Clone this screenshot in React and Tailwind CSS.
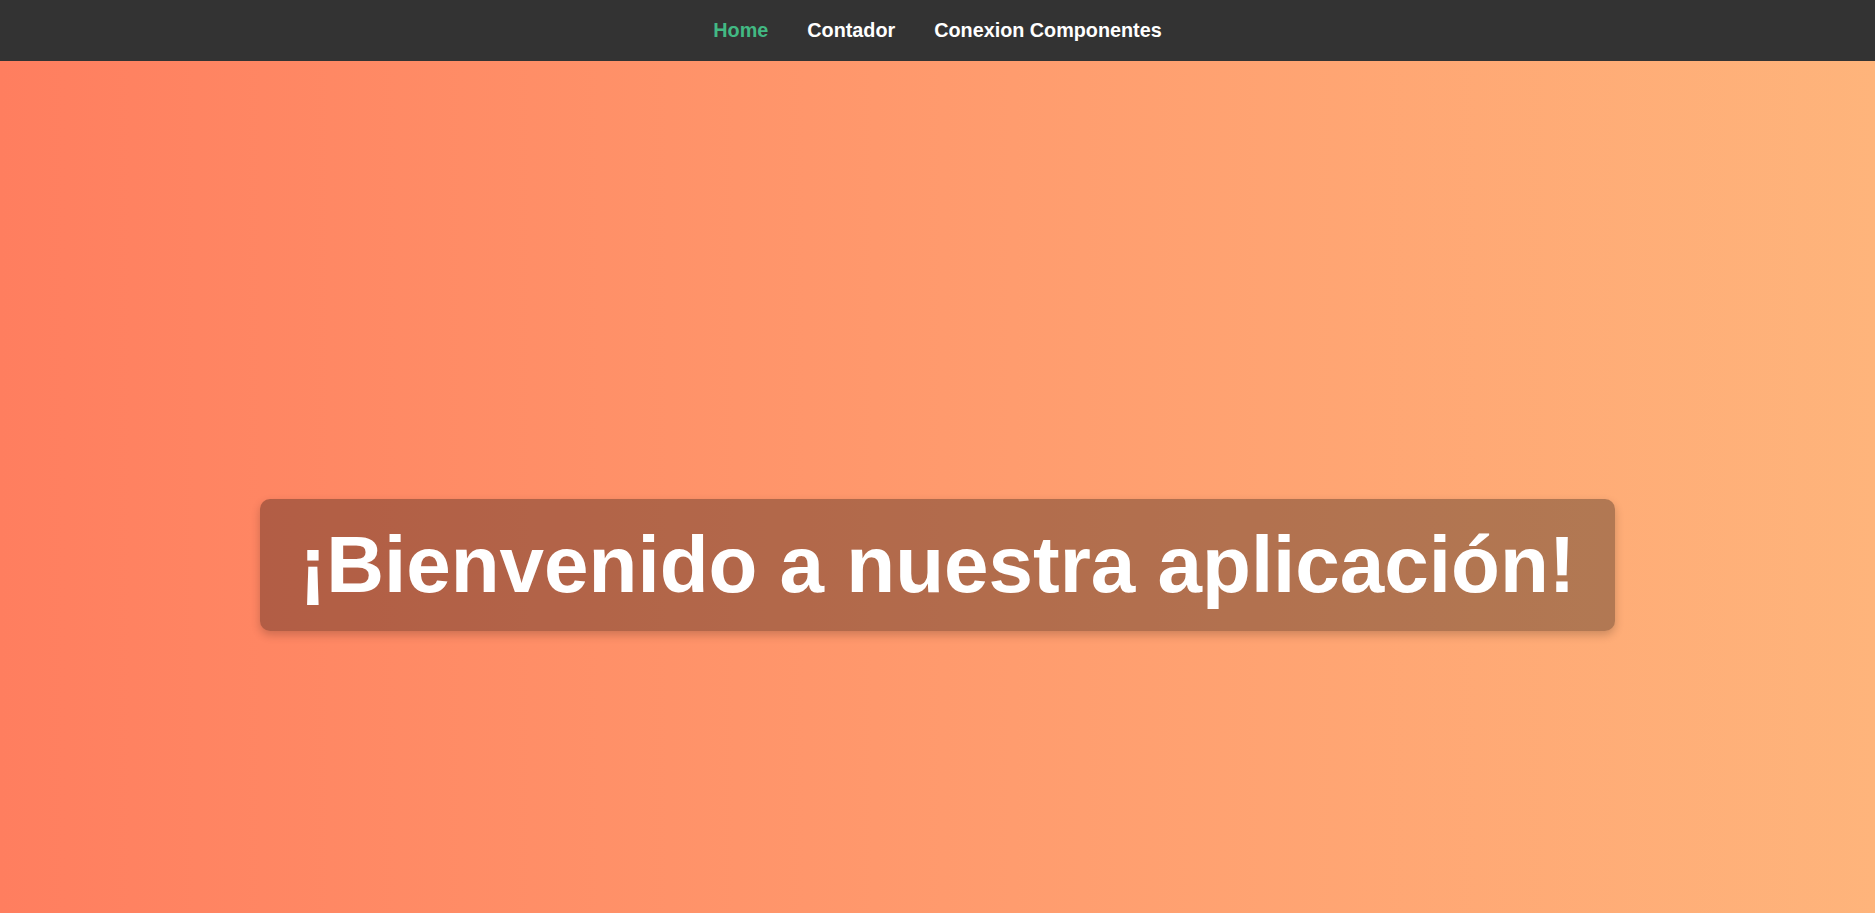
export default function App() {
  return (
    <div className="min-h-screen w-full" style={{ fontFamily: '"Liberation Sans", Arial, sans-serif' }}>
      <nav className="h-[61px] bg-[#333333] flex items-center justify-center gap-[39px]">
        <a className="text-[19.8px] font-bold text-[#42b983] leading-none">Home</a>
        <a className="text-[19.8px] font-bold text-white leading-none">Contador</a>
        <a className="text-[19.8px] font-bold text-white leading-none">Conexion Componentes</a>
      </nav>
      <main className="h-[852px] bg-gradient-to-r from-[#ff7e5f] to-[#feb47b] flex items-center justify-center pt-[155px]">
        <h1 className="text-[80px] font-bold text-white bg-black/30 rounded-[10px] px-[40px] py-[20px] leading-[1.15] shadow-[0_4px_10px_rgba(0,0,0,0.2)]">
          ¡Bienvenido a nuestra aplicación!
        </h1>
      </main>
    </div>
  );
}
